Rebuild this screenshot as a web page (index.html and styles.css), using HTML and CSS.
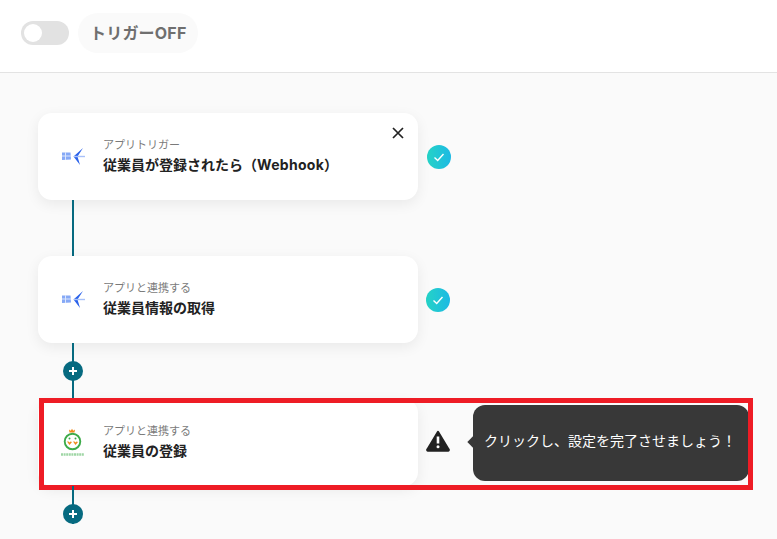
FILE: index.html
```html
<!DOCTYPE html>
<html lang="ja">
<head>
    <meta charset="UTF-8">
    <title>フローボット</title>
    <link rel="stylesheet" href="styles.css">
</head>
<body>

    <header class="topbar">
        <span class="toggle"><span class="toggle-knob"></span></span>
        <span class="trigger-label">トリガーOFF</span>
    </header>

    <main class="flow">

        <!-- Step 1 -->
        <div class="step">
            <div class="card">
                <svg class="app-icon" viewBox="0 0 26 20">
                    <path d="M2 5.500h8.500l.5 7-9 .5z" fill="#86a9f6"/>
                    <path d="M5.500 5v8M2 9h9" stroke="#dbe6fd" stroke-width="1"/>
                    <path d="M23 1 13.500 9.500 20 18l-2.500-8.500z" fill="#2b62ea"/>
                    <path d="M14 9.500h11" stroke="#a8c1f9" stroke-width="1.400"/>
                </svg>
                <div class="card-text">
                    <div class="card-kind">アプリトリガー</div>
                    <div class="card-title">従業員が登録されたら（<span class="latin">Webhook</span>）</div>
                </div>
                <svg class="close" viewBox="0 0 12 12">
                    <path d="M1 1l10 10M11 1 1 11" stroke="#222" stroke-width="1.7"/>
                </svg>
            </div>
            <span class="check">
                <svg viewBox="0 0 12 12"><path d="M1.500 6.500 4.700 9.500 10.500 3" fill="none" stroke="#fff" stroke-width="1.400"/></svg>
            </span>
        </div>

        <div class="link"></div>

        <!-- Step 2 -->
        <div class="step">
            <div class="card">
                <svg class="app-icon" viewBox="0 0 26 20">
                    <path d="M2 5.500h8.500l.5 7-9 .5z" fill="#86a9f6"/>
                    <path d="M5.500 5v8M2 9h9" stroke="#dbe6fd" stroke-width="1"/>
                    <path d="M23 1 13.500 9.500 20 18l-2.500-8.500z" fill="#2b62ea"/>
                    <path d="M14 9.500h11" stroke="#a8c1f9" stroke-width="1.400"/>
                </svg>
                <div class="card-text">
                    <div class="card-kind">アプリと連携する</div>
                    <div class="card-title">従業員情報の取得</div>
                </div>
            </div>
            <span class="check check-alt">
                <svg viewBox="0 0 12 12"><path d="M1.500 6.500 4.700 9.500 10.500 3" fill="none" stroke="#fff" stroke-width="1.400"/></svg>
            </span>
        </div>

        <div class="link"><span class="plus"></span></div>

        <!-- Step 3 -->
        <div class="step">
            <div class="card">
                <svg class="app-icon app-icon-green" viewBox="0 0 26 30">
                    <path d="M10.500 4.500 10 1.500l1.800 1.200L13 .8l1.200 1.900L16 1.500l-.5 3z" fill="#f08a1d"/>
                    <circle cx="13.500" cy="13.500" r="7.800" fill="#fff" stroke="#3dab4a" stroke-width="1.900"/>
                    <path d="M8 13.500l2.500 3.500 2.500-3-1.500-.5-1 1-1-1zM14 13.500l2.500 3.500 2.500-3-1.500-.5-1 1-1-1z" fill="#f08a1d"/>
                    <circle cx="10.500" cy="10.500" r="1" fill="#3dab4a"/>
                    <circle cx="16.500" cy="10.500" r="1" fill="#3dab4a"/>
                    <path d="M2 26.500h23" stroke="#9fd6a5" stroke-width="2.600" stroke-dasharray="2 .6"/>
                </svg>
                <div class="card-text">
                    <div class="card-kind">アプリと連携する</div>
                    <div class="card-title">従業員の登録</div>
                </div>
            </div>
            <svg class="warn" viewBox="0 0 24 22">
                <path d="M12 2 22.500 19.500a.6.6 0 0 1-.5 1H2a.6.6 0 0 1-.5-1z" fill="#222" stroke="#222" stroke-linejoin="round" stroke-width="2.400"/>
                <path d="M12 6.500v7" stroke="#fff" stroke-width="2.600"/>
                <circle cx="12" cy="16.800" r="1.500" fill="#fff"/>
            </svg>
            <div class="tip">クリックし、設定を完了させましょう！</div>
            <div class="highlight"></div>
        </div>

        <div class="link link-end"><span class="plus"></span></div>

    </main>

</body>
</html>
```

FILE: styles.css
```css
html, body {
    height: 100%;
}
body {
    margin: 0;
    overflow: hidden;
    background-color: #fafafa;
    color: #222;
    font-family: "Inter", "Noto Sans CJK JP", sans-serif;
}
.topbar {
    display: flex;
    align-items: center;
    gap: 9px;
    box-sizing: border-box;
    height: 73px;
    padding: 0 0 6px 21px;
    background-color: #fff;
    border-bottom: 1px solid #e3e3e3;
}
.toggle {
    display: block;
    box-sizing: border-box;
    width: 48px;
    height: 24px;
    padding: 3px;
    border-radius: 12px;
    background-color: #e2e2e2;
}
.toggle-knob {
    display: block;
    width: 18px;
    height: 18px;
    border-radius: 50%;
    background-color: #fff;
}
.trigger-label {
    display: flex;
    align-items: center;
    box-sizing: border-box;
    width: 120px;
    height: 40px;
    padding: 0 0 2px 12px;
    border-radius: 20px;
    background-color: #fafafa;
    color: #6f6f6f;
    font-size: 16px;
    font-weight: 700;
    letter-spacing: 0.2px;
}
.flow {
    padding: 40px 0 0 38px;
}
.step {
    position: relative;
    display: flex;
    align-items: center;
}
.card {
    position: relative;
    display: flex;
    align-items: center;
    box-sizing: border-box;
    width: 380px;
    height: 87px;
    padding: 0 20px 0 22px;
    background-color: #fff;
    border-radius: 14px;
    box-shadow: 0 4px 14px rgba(0, 0, 0, 0.07);
}
.app-icon {
    flex: none;
    width: 26px;
    height: 20px;
    margin-right: 17px;
}
.app-icon-green {
    height: 30px;
    margin: 0 18px 0 -1px;
}
.card-text {
    margin-top: -3px;
}
.card-kind {
    color: #7a7a7a;
    font-size: 11px;
    line-height: 18px;
}
.card-title {
    margin-top: 1px;
    font-size: 14px;
    font-weight: 700;
    line-height: 20px;
}
.latin {
    letter-spacing: 0.3px;
}
.close {
    position: absolute;
    top: 14px;
    right: 14px;
    width: 12px;
    height: 12px;
}
.check {
    display: flex;
    align-items: center;
    justify-content: center;
    width: 24px;
    height: 24px;
    margin-left: 9px;
    border-radius: 50%;
    background: linear-gradient(90deg, #25d3c6, #1cb9e4);
}
.check svg {
    width: 12px;
    height: 12px;
}
.check-alt {
    margin-left: 8px;
}
.link {
    position: relative;
    box-sizing: border-box;
    display: flex;
    align-items: center;
    height: 56px;
    margin-left: 34px;
    border-left: 2px solid #066a80;
}
.link-end {
    height: 38px;
    align-items: flex-end;
}
.plus {
    position: absolute;
    left: -11px;
    width: 20px;
    height: 20px;
    border-radius: 50%;
    background:
        linear-gradient(#fff, #fff) center / 8px 2px no-repeat,
        linear-gradient(#fff, #fff) center / 2px 8px no-repeat,
        #066a80;
}
.warn {
    width: 24px;
    height: 22px;
    margin: -4px 0 0 8px;
}
.tip {
    position: relative;
    display: flex;
    align-items: center;
    box-sizing: border-box;
    width: 276px;
    height: 76px;
    margin-left: 23px;
    padding: 0 0 5px 11px;
    border-radius: 12px;
    background-color: #383838;
    color: #fff;
    font-size: 14px;
    white-space: nowrap;
}
.tip::before {
    content: "";
    position: absolute;
    top: 33px;
    left: -4px;
    width: 8px;
    height: 8px;
    background-color: #383838;
    transform: rotate(45deg);
}
.highlight {
    position: absolute;
    top: -1px;
    left: 1px;
    width: 714px;
    height: 92px;
    box-sizing: border-box;
    border: 5px solid #ee1c25;
    pointer-events: none;
}
```
